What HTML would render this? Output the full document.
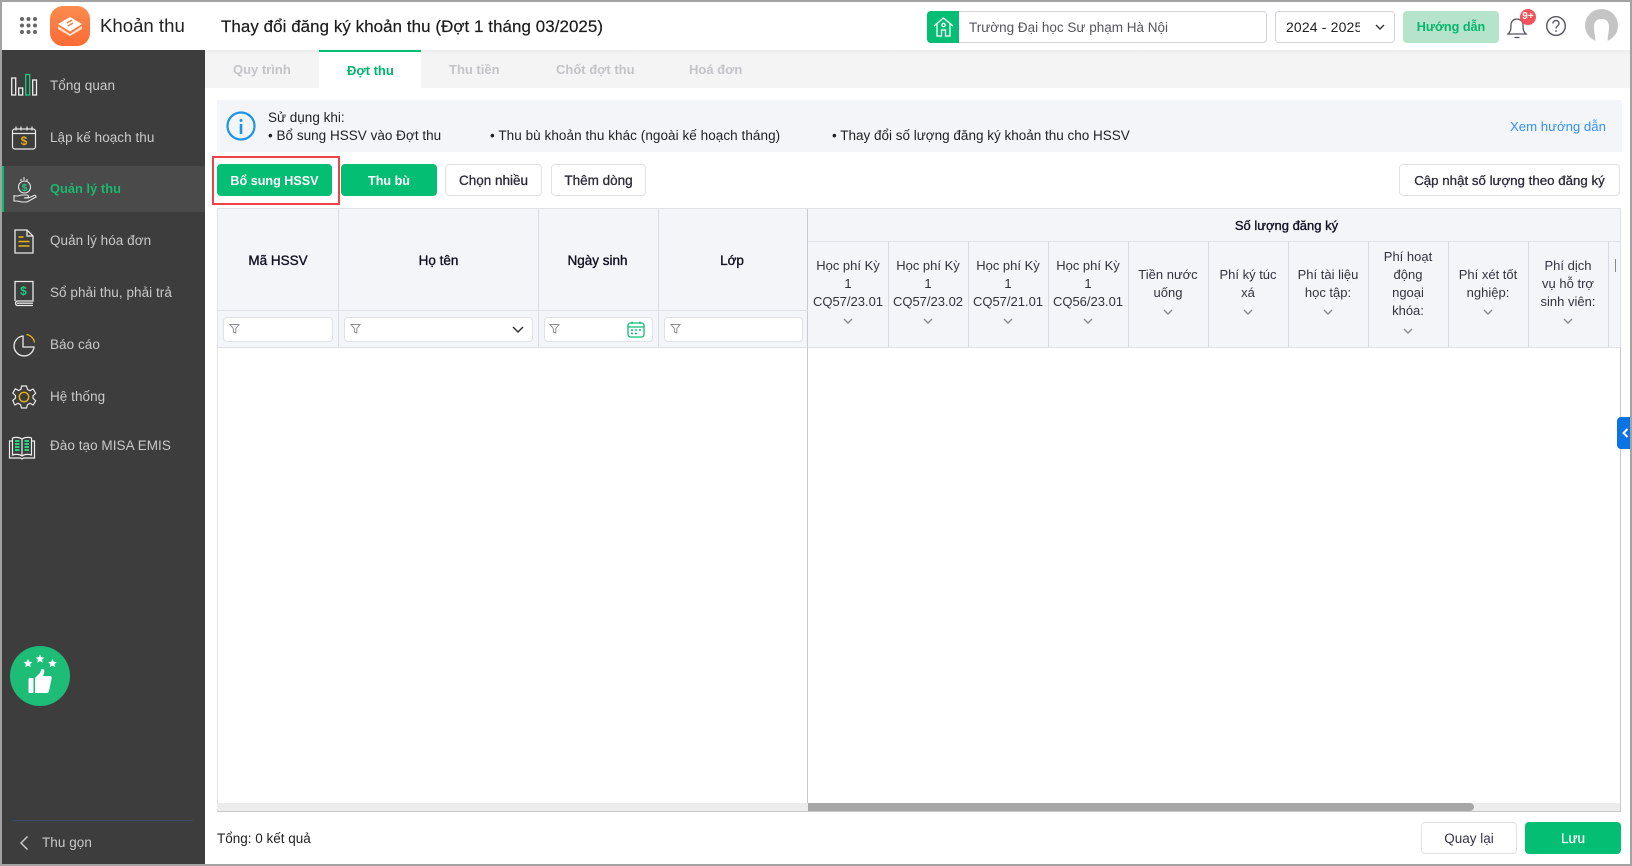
<!DOCTYPE html>
<html lang="vi"><head><meta charset="utf-8"><title>Khoản thu</title>
<style>
*{box-sizing:border-box}
html,body{margin:0;padding:0;width:1632px;height:866px;overflow:hidden;background:#fff;font-family:"Liberation Sans","Noto Sans CJK SC",sans-serif;color:#1f1f2b}
.a{position:absolute}
.t{position:absolute;white-space:nowrap;line-height:18px;font-size:13.5px}
.s{color:#c9c9c9;font-size:13.5px;letter-spacing:.05px;left:50px}
.tab{color:#c4c4c8;font-weight:bold;font-size:13px;top:61px}
.btn{position:absolute;border-radius:4px;text-align:center;font-size:13px;line-height:34px;height:32px;white-space:nowrap}
.g{background:#03be73;color:#fff;font-weight:bold}
.w{background:#fff;border:1px solid #dfe1e6;line-height:32px;font-size:13.5px;-webkit-text-stroke:.3px #2b2b3a;color:#2b2b3a}
.hc{position:absolute;top:208px;height:139px;background:#f3f5f9;border-right:1px solid #d8dbe5}
.h{font-size:13.5px;-webkit-text-stroke:.35px #111122;text-align:center;color:#111122;top:252px}
.inp{position:absolute;top:317px;height:25px;background:#fff;border:1px solid #dfe1e6;border-radius:4px}
.c{position:absolute;width:80px;text-align:center;font-size:13px;line-height:18px;color:#33333f;white-space:nowrap}
</style></head><body>
<svg width="0" height="0" style="position:absolute"><defs>
<g id="fl"><path d="M1 1.5h9L6.8 5.6V10L4.4 9V5.6Z" fill="none" stroke="#8f8f9a" stroke-width="1"/></g>
<g id="ch"><path d="M1 1l4 4 4-4" fill="none" stroke="#8a8a94" stroke-width="1.4"/></g>
</defs></svg>

<!-- header -->
<svg class="a" style="left:20px;top:17px" width="17" height="17" fill="#666"><circle cx="2" cy="2" r="2"/><circle cx="8.5" cy="2" r="2"/><circle cx="15" cy="2" r="2"/><circle cx="2" cy="8.5" r="2"/><circle cx="8.5" cy="8.5" r="2"/><circle cx="15" cy="8.5" r="2"/><circle cx="2" cy="15" r="2"/><circle cx="8.5" cy="15" r="2"/><circle cx="15" cy="15" r="2"/></svg>
<svg class="a" style="left:50px;top:6px" width="40" height="40" viewBox="0 0 40 40"><defs><linearGradient id="lg" x1="0" y1="0" x2="0" y2="1"><stop offset="0" stop-color="#fb8c4e"/><stop offset="1" stop-color="#fb6a35"/></linearGradient></defs><rect width="40" height="40" rx="13" fill="url(#lg)"/><path d="M8 20l12 8 12-8v3l-12 7-12-7z" fill="#fde3d2"/><path d="M8 18l12-7 12 7-12 7.500z" fill="#fff"/><path d="M17 17l5-3M18 20l5-3" stroke="#fb7a40" stroke-width="1.6"/></svg>
<div class="t" style="left:100px;top:15px;font-size:18.6px;line-height:22px;color:#222">Khoản thu</div>
<div class="t" style="left:221px;top:16px;font-size:16.9px;line-height:22px;letter-spacing:.08px;color:#1c1c1c;-webkit-text-stroke:.2px #1c1c1c">Thay đổi đăng ký khoản thu (Đợt 1 tháng 03/2025)</div>

<div class="a" style="left:927px;top:11px;width:340px;height:32px;border:1px solid #d4d6dc;border-radius:4px;background:#fff"></div>
<div class="a" style="left:927px;top:11px;width:32px;height:32px;background:#03be73;border-radius:4px 0 0 4px"></div>
<svg class="a" style="left:933px;top:16px" width="21" height="22" viewBox="0 0 21 22" fill="none" stroke="#fff" stroke-width="1.3"><path d="M1 10L10.500 2 20 10"/><path d="M4 8v12h4.500v-6h4v6H17V8"/><circle cx="10.500" cy="9" r="1.700"/></svg>
<div class="t" style="left:969px;top:19px;color:#55555f;font-size:13.5px">Trường Đại học Sư phạm Hà Nội</div>

<div class="a" style="left:1275px;top:11px;width:120px;height:32px;border:1px solid #d4d6dc;border-radius:4px;background:#fff"></div>
<div class="t" style="left:1286px;top:18px;width:74px;overflow:hidden;font-size:14px;color:#222;letter-spacing:.15px">2024 - 2025</div>
<svg class="a" style="left:1375px;top:24px" width="10" height="7"><path d="M1 1l4 4 4-4" fill="none" stroke="#333" stroke-width="1.4"/></svg>

<div class="a" style="left:1403px;top:11px;width:96px;height:32px;background:#b6e4cb;border-radius:4px;text-align:center;line-height:33px;font-size:12.6px;font-weight:bold;color:#06b56c">Hướng dẫn</div>
<svg class="a" style="left:1506px;top:14px" width="24" height="26" viewBox="0 0 24 26" fill="none" stroke="#55555f" stroke-width="1.3"><path d="M2 20c2-2 3-3 3-9 0-4 3-6 6-6s6 2 6 6c0 6 1 7 3 9z"/><path d="M8.500 23.500h5"/></svg>
<div class="a" style="left:1520px;top:9px;width:16px;height:16px;border-radius:8px;background:#f4525a;color:#fff;font-size:10px;font-weight:bold;text-align:center;line-height:16px">9+</div>
<svg class="a" style="left:1545px;top:15px" width="22" height="22" viewBox="0 0 22 22" fill="none" stroke="#55555f" stroke-width="1.4"><circle cx="11" cy="11" r="9.300"/><path d="M8 8.500c0-4 6-4 6 0 0 2.500-3 2.500-3 5"/><path d="M11 15.300v1.600"/></svg>
<svg class="a" style="left:1584px;top:9px" width="35" height="33" viewBox="0 0 35 33"><circle cx="17.500" cy="16.500" r="16.500" fill="#c4c4c4"/><path d="M11 33C12 28 10 25 10 18 10 12 13 10 17.500 10 22 10 25 12 25 18 25 25 23 28 24 33Z" fill="#fff"/></svg>

<!-- sidebar -->
<div class="a" style="left:2px;top:50px;width:203px;height:814px;background:#3d3d3d"></div>
<div class="a" style="left:2px;top:166px;width:203px;height:46px;background:#4a4a4a;border-left:2px solid #03be73"></div>

<svg class="a" style="left:10px;top:72px" width="30" height="26" viewBox="0 0 30 26" fill="none" stroke="#eeeeee" stroke-width="1.300"><rect x="1.700" y="6" width="4" height="17"/><rect x="8.700" y="16" width="4" height="7"/><rect x="15.700" y="2.500" width="4" height="20.500" stroke="#1fc97f"/><rect x="22.700" y="8" width="3.800" height="15"/></svg>
<svg class="a" style="left:10px;top:124px" width="28" height="28" viewBox="0 0 28 28" fill="none" stroke="#e8e8e8" stroke-width="1.200"><rect x="2.500" y="5" width="23" height="20" rx="2.500"/><path d="M2.500 9.500h23M6 2.500V6.500M11 2.500V6.500M17 2.500V6.500M22 2.500V6.500"/><text x="14" y="21" text-anchor="middle" font-size="12" font-weight="bold" fill="#e5a916" stroke="none" font-family="Liberation Sans">$</text></svg>
<svg class="a" style="left:12px;top:176px" width="26" height="27" viewBox="0 0 26 27" fill="none" stroke="#e8e8e8" stroke-width="1.100"><path d="M12 1v3M9 3v2M15 3v2"/><circle cx="12.500" cy="11" r="6"/><text x="12.500" y="15" text-anchor="middle" font-size="10" font-weight="bold" fill="#1fc97f" stroke="none" font-family="Liberation Sans">$</text><path d="M2 19v6h3l5 1h5l9-5c0-2-2-2-3-1l-5 2h-4l4-.5c1-1.500 0-2.500-1-2.500H9l-3 1H2z"/></svg>
<svg class="a" style="left:12px;top:228px" width="24" height="28" viewBox="0 0 24 28" fill="none" stroke="#e8e8e8" stroke-width="1.300"><path d="M3 2h12l6 6v17H3z"/><path d="M15 2v6h6"/><path d="M6.500 9h5M6.500 13.500h11M6.500 18h11" stroke="#e5b416" stroke-width="1.500"/></svg>
<svg class="a" style="left:12px;top:279px" width="24" height="28" viewBox="0 0 24 28" fill="none" stroke="#e8e8e8" stroke-width="1.300"><path d="M3 22V2.500h18v19.500H5a2.500 2.500 0 0 0 0 4.500h16"/><path d="M5 24.200h16"/><text x="11.500" y="16" text-anchor="middle" font-size="12" font-weight="bold" fill="#1fc97f" stroke="none" font-family="Liberation Sans">$</text></svg>
<svg class="a" style="left:12px;top:333px" width="25" height="25" viewBox="0 0 25 25" fill="none" stroke="#e8e8e8" stroke-width="1.300"><path d="M11 3a10 10 0 1 0 11 11H11z"/><path d="M14.500 1.500a9.500 9.500 0 0 1 8 8" stroke="#e5b416"/></svg>
<svg class="a" style="left:11px;top:384px" width="26" height="26" viewBox="0 0 26 26" fill="none" stroke="#e8e8e8" stroke-width="1.200" stroke-linejoin="round"><path d="M10.500 2h5l1 3.500 2.500 1.200 3.200-1.700 2.500 4.300-2.700 2.500v2.400l2.700 2.500-2.500 4.300-3.200-1.700-2.500 1.200-1 3.500h-5l-1-3.500-2.500-1.200-3.200 1.700L1.800 16.500l2.700-2.500v-2.400L1.800 9.100 4.300 4.800 7.500 6.500 10 5.300z"/><circle cx="13" cy="13" r="4.700" stroke="#e5b416" stroke-width="1.400"/></svg>
<svg class="a" style="left:8px;top:434px" width="28" height="26" viewBox="0 0 28 26" fill="none" stroke="#eeeeee" stroke-width="1.200"><path d="M14 5C11 3 7 3 4.500 4v17c3-1 7-1 9.500 1 2.500-2 6.500-2 9.500-1V4C21 3 17 3 14 5zM14 5v17"/><path d="M4.500 7H1.500v17h11l1.500 1 1.500-1h11V7h-3"/><path d="M7 7h4.500M7 10h4.500M7 13h4.500M7 16h4.500M16.500 7H21M16.500 10H21M16.500 13H21M16.500 16H21" stroke="#1fd880" stroke-width="2"/></svg>

<div class="t s" style="top:77px">Tổng quan</div>
<div class="t s" style="top:129px">Lập kế hoạch thu</div>
<div class="t s" style="top:180px;color:#1bb870;font-weight:bold;font-size:12.8px">Quản lý thu</div>
<div class="t s" style="top:232px">Quản lý hóa đơn</div>
<div class="t s" style="top:284px">Sổ phải thu, phải trả</div>
<div class="t s" style="top:336px">Báo cáo</div>
<div class="t s" style="top:388px">Hệ thống</div>
<div class="t s" style="top:437px">Đào tạo MISA EMIS</div>

<div class="a" style="left:10px;top:646px;width:60px;height:60px;border-radius:50%;background:#1dbd77"></div>
<svg class="a" style="left:10px;top:646px" width="60" height="60" viewBox="0 0 60 60" fill="#fff"><path d="M18 13l1.300 2.700 3 .4-2.200 2 .6 3-2.700-1.500-2.700 1.500.6-3-2.200-2 3-.4zM30 8.500l1.300 2.700 3 .4-2.200 2 .6 3-2.700-1.500-2.700 1.500.6-3-2.200-2 3-.4zM42.500 13l1.300 2.700 3 .4-2.200 2 .6 3-2.700-1.500-2.700 1.500.6-3-2.200-2 3-.4z"/><rect x="18.500" y="32" width="5" height="15" rx="1"/><path d="M25 32l5-5 1.500-4c2.500-.5 3.500 2 2.500 4l-1 3h7c1.500 0 2 1.500 1.500 3l-2.500 12c-.3 1.200-1 2-2.500 2H25z"/></svg>

<div class="a" style="left:12px;top:820px;width:181px;height:1px;background:#3c4a63"></div>
<svg class="a" style="left:19px;top:835px" width="10" height="16"><path d="M8.500 1.500L2 8l6.500 6.500" fill="none" stroke="#c9c9c9" stroke-width="1.500"/></svg>
<div class="t s" style="left:42px;top:834px">Thu gọn</div>

<!-- tabs -->
<div class="a" style="left:205px;top:50px;width:1425px;height:38px;background:#f4f4f5"></div>
<div class="a" style="left:205px;top:50px;width:1425px;height:5px;background:linear-gradient(#ececec,#f4f4f5)"></div>
<div class="a" style="left:319px;top:50px;width:102px;height:38px;background:#fff;border-top:2px solid #03be73"></div>
<div class="t tab" style="left:233px">Quy trình</div>
<div class="t tab" style="left:347px;top:62px;color:#03b46c">Đợt thu</div>
<div class="t tab" style="left:449px">Thu tiền</div>
<div class="t tab" style="left:556px">Chốt đợt thu</div>
<div class="t tab" style="left:689px">Hoá đơn</div>

<!-- info -->
<div class="a" style="left:217px;top:100px;width:1405px;height:52px;background:#f3f5f9"></div>
<svg class="a" style="left:226px;top:111px" width="30" height="30" viewBox="0 0 30 30"><circle cx="15" cy="15" r="13.500" fill="none" stroke="#1c94e8" stroke-width="2.200"/><circle cx="15" cy="9.500" r="1.500" fill="#1c94e8"/><rect x="13.700" y="13" width="2.600" height="10" fill="#1c94e8"/></svg>
<div class="t" style="left:268px;top:109px;color:#222;font-size:13.500px">Sử dụng khi:</div>
<div class="t" style="left:268px;top:127px;color:#222;font-size:13.500px;letter-spacing:.02px">• Bổ sung HSSV vào Đợt thu</div>
<div class="t" style="left:490px;top:127px;color:#222;font-size:13.500px;letter-spacing:.06px">• Thu bù khoản thu khác (ngoài kế hoạch tháng)</div>
<div class="t" style="left:832px;top:127px;color:#222;font-size:13.500px">• Thay đổi số lượng đăng ký khoản thu cho HSSV</div>
<div class="t" style="left:1510px;top:118px;color:#3390f5;font-size:13.200px">Xem hướng dẫn</div>

<!-- buttons -->
<div class="a" style="left:212px;top:156px;width:128px;height:49px;border:2px solid #ee4449"></div>
<div class="btn g" style="left:217px;top:164px;width:115px;font-size:12.6px">Bổ sung HSSV</div>
<div class="btn g" style="left:341px;top:164px;width:96px;font-size:12.6px">Thu bù</div>
<div class="btn w" style="left:445px;top:164px;width:97px">Chọn nhiều</div>
<div class="btn w" style="left:551px;top:164px;width:95px">Thêm dòng</div>
<div class="btn w" style="left:1399px;top:164px;width:221px;font-size:13.3px">Cập nhật số lượng theo đăng ký</div>

<!-- table -->
<div class="hc" style="left:218px;width:121px"></div>
<div class="hc" style="left:339px;width:200px"></div>
<div class="hc" style="left:539px;width:120px"></div>
<div class="hc" style="left:659px;width:149px;border-right:1px solid #c8cad2"></div>
<div class="a" style="left:808px;top:208px;width:812px;height:139px;background:#f3f5f9"></div>
<div class="a" style="left:217px;top:208px;width:1404px;height:604px;border:1px solid #dfe1e6;border-bottom:none"></div>
<div class="a" style="left:218px;top:310px;width:590px;height:1px;background:#dfe1e9"></div>
<div class="a" style="left:218px;top:347px;width:1402px;height:1px;background:#dfe1e9"></div>
<div class="a" style="left:808px;top:241px;width:812px;height:1px;background:#dfe1e9"></div>
<div class="a" style="left:807px;top:347px;width:1px;height:456px;background:#c8cad2"></div>
<div class="a" style="left:888px;top:241px;width:1px;height:106px;background:#d8dbe5"></div>
<div class="a" style="left:968px;top:241px;width:1px;height:106px;background:#d8dbe5"></div>
<div class="a" style="left:1048px;top:241px;width:1px;height:106px;background:#d8dbe5"></div>
<div class="a" style="left:1128px;top:241px;width:1px;height:106px;background:#d8dbe5"></div>
<div class="a" style="left:1208px;top:241px;width:1px;height:106px;background:#d8dbe5"></div>
<div class="a" style="left:1288px;top:241px;width:1px;height:106px;background:#d8dbe5"></div>
<div class="a" style="left:1368px;top:241px;width:1px;height:106px;background:#d8dbe5"></div>
<div class="a" style="left:1448px;top:241px;width:1px;height:106px;background:#d8dbe5"></div>
<div class="a" style="left:1528px;top:241px;width:1px;height:106px;background:#d8dbe5"></div>
<div class="a" style="left:1608px;top:241px;width:1px;height:106px;background:#d8dbe5"></div>

<div class="t h" style="left:218px;width:120px">Mã HSSV</div>
<div class="t h" style="left:339px;width:199px">Họ tên</div>
<div class="t h" style="left:539px;width:117px">Ngày sinh</div>
<div class="t h" style="left:659px;width:146px">Lớp</div>
<div class="t h" style="left:1233px;width:107px;top:217px;font-size:13px">Số lượng đăng ký</div>

<div class="inp" style="left:223px;width:110px"></div>
<div class="inp" style="left:344px;width:189px"></div>
<div class="inp" style="left:544px;width:109px"></div>
<div class="inp" style="left:664px;width:139px"></div>
<svg class="a" style="left:229px;top:323px" width="12" height="12"><use href="#fl"/></svg>
<svg class="a" style="left:350px;top:323px" width="12" height="12"><use href="#fl"/></svg>
<svg class="a" style="left:549px;top:323px" width="12" height="12"><use href="#fl"/></svg>
<svg class="a" style="left:670px;top:323px" width="12" height="12"><use href="#fl"/></svg>
<svg class="a" style="left:512px;top:326px" width="12" height="8"><path d="M1 1l5 5 5-5" fill="none" stroke="#333" stroke-width="1.500"/></svg>
<svg class="a" style="left:627px;top:321px" width="18" height="17" viewBox="0 0 18 17" fill="none" stroke="#12bd78" stroke-width="1.300"><rect x="1" y="2" width="16" height="14" rx="2.500"/><path d="M1 6h16M5 0.500V3M13 0.500V3"/><path d="M4 9h2M8 9h2M12 9h2M4 12.500h2M8 12.500h2" stroke-width="1.500"/></svg>

<!-- column heads -->
<div class="c" style="left:808px;top:257px">Học phí Kỳ<br>1<br>CQ57/23.01</div>
<div class="c" style="left:888px;top:257px">Học phí Kỳ<br>1<br>CQ57/23.02</div>
<div class="c" style="left:968px;top:257px">Học phí Kỳ<br>1<br>CQ57/21.01</div>
<div class="c" style="left:1048px;top:257px">Học phí Kỳ<br>1<br>CQ56/23.01</div>
<div class="c" style="left:1128px;top:266px">Tiền nước<br>uống</div>
<div class="c" style="left:1208px;top:266px">Phí ký túc<br>xá</div>
<div class="c" style="left:1288px;top:266px">Phí tài liệu<br>học tập:</div>
<div class="c" style="left:1368px;top:248px">Phí hoạt<br>động<br>ngoại<br>khóa:</div>
<div class="c" style="left:1448px;top:266px">Phí xét tốt<br>nghiệp:</div>
<div class="c" style="left:1528px;top:257px">Phí dịch<br>vụ hỗ trợ<br>sinh viên:</div>
<svg class="a" style="left:843px;top:318px" width="10" height="7"><use href="#ch"/></svg>
<svg class="a" style="left:923px;top:318px" width="10" height="7"><use href="#ch"/></svg>
<svg class="a" style="left:1003px;top:318px" width="10" height="7"><use href="#ch"/></svg>
<svg class="a" style="left:1083px;top:318px" width="10" height="7"><use href="#ch"/></svg>
<svg class="a" style="left:1163px;top:309px" width="10" height="7"><use href="#ch"/></svg>
<svg class="a" style="left:1243px;top:309px" width="10" height="7"><use href="#ch"/></svg>
<svg class="a" style="left:1323px;top:309px" width="10" height="7"><use href="#ch"/></svg>
<svg class="a" style="left:1403px;top:328px" width="10" height="7"><use href="#ch"/></svg>
<svg class="a" style="left:1483px;top:309px" width="10" height="7"><use href="#ch"/></svg>
<svg class="a" style="left:1563px;top:318px" width="10" height="7"><use href="#ch"/></svg>
<div class="a" style="left:1615px;top:259px;width:1px;height:13px;background:#888"></div>

<!-- scrollbars -->
<div class="a" style="left:217px;top:803px;width:1404px;height:8px;background:#ececec"></div>
<div class="a" style="left:808px;top:803px;width:666px;height:8px;background:#a6a6a6;border-radius:0 4px 4px 0"></div>
<div class="a" style="left:217px;top:811px;width:1404px;height:1px;background:#c8c8c8"></div>
<div class="a" style="left:1620px;top:347px;width:1px;height:465px;background:#c8c8c8"></div>

<!-- handle -->
<div class="a" style="left:1617px;top:417px;width:13px;height:32px;background:#0b74e5;border-radius:4px 0 0 4px"></div>
<svg class="a" style="left:1622px;top:428px" width="7" height="10"><path d="M5.500 1L1.500 5l4 4" fill="none" stroke="#fff" stroke-width="2"/></svg>

<!-- footer -->
<div class="t" style="left:217px;top:830px;color:#222;font-size:13.500px">Tổng: 0 kết quả</div>
<div class="btn w" style="left:1421px;top:822px;width:96px;-webkit-text-stroke:0;color:#33334a">Quay lại</div>
<div class="btn g" style="left:1525px;top:822px;width:96px;font-weight:normal;font-size:13.5px;-webkit-text-stroke:.2px #fff">Lưu</div>

<!-- window border -->
<div class="a" style="left:0;top:0;width:1632px;height:866px;border:2px solid #a3a3a3;pointer-events:none"></div>
</body></html>
